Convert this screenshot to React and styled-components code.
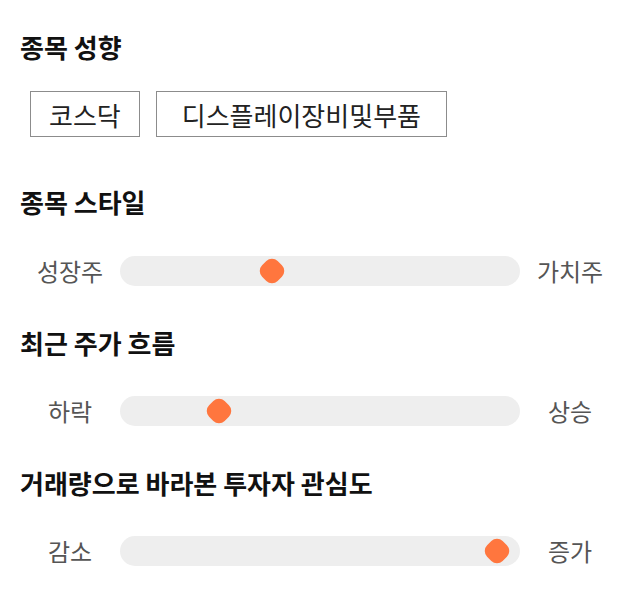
import React from "react";
import styled, { createGlobalStyle } from "styled-components";

const Global = createGlobalStyle`
  html, body { margin: 0; padding: 0; background: #fff; }
  body { font-family: "Noto Sans CJK KR", "Noto Sans", sans-serif; color: #111; }
`;

const Page = styled.div`
  width: 640px;
  padding: 32px 20px 0 20px;
  box-sizing: border-box;
  display: flex;
  flex-direction: column;
`;

const Section = styled.section`
  display: flex;
  flex-direction: column;
  gap: ${(p) => p.$gap}px;
  margin-bottom: ${(p) => p.$mb}px;
`;

const Heading = styled.h2`
  margin: 0;
  font-size: 26px;
  line-height: 30px;
  font-weight: 700;
  color: #111;
`;

const Chips = styled.div`
  display: flex;
  gap: 16px;
  padding-left: 10px;
`;

const Chip = styled.div`
  height: 46px;
  box-sizing: border-box;
  border: 1px solid #8c8c8c;
  padding: 0 ${(p) => p.$pad}px;
  display: flex;
  align-items: center;
  font-size: 26px;
  color: #222;
  background: #fff;
`;

const SliderRow = styled.div`
  display: grid;
  grid-template-columns: 100px 400px 100px;
  align-items: center;
  height: 30px;
`;

const SideLabel = styled.span`
  text-align: center;
  font-size: 24px;
  line-height: 30px;
  color: #555;
`;

const Track = styled.div`
  position: relative;
  height: 30px;
  border-radius: 15px;
  background: #eeeeee;
`;

const Thumb = styled.div`
  position: absolute;
  top: 50%;
  width: 22px;
  height: 22px;
  margin-left: -11px;
  margin-top: -11px;
  border-radius: 8px;
  background: #ff763e;
  transform: rotate(45deg);
`;

function Slider({ left, right, value }) {
  const pos = 14 + value * 372;
  return (
    <SliderRow>
      <SideLabel>{left}</SideLabel>
      <Track>
        <Thumb style={{ left: `${pos}px` }} />
      </Track>
      <SideLabel>{right}</SideLabel>
    </SliderRow>
  );
}

export default function App() {
  return (
    <>
      <Global />
      <Page>
        <Section $gap={29} $mb={50}>
          <Heading>종목 성향</Heading>
          <Chips>
            <Chip $pad={18}>코스닥</Chip>
            <Chip $pad={25}>디스플레이장비및부품</Chip>
          </Chips>
        </Section>
        <Section $gap={39} $mb={42}>
          <Heading>종목 스타일</Heading>
          <Slider left="성장주" right="가치주" value={0.371} />
        </Section>
        <Section $gap={38} $mb={42}>
          <Heading>최근 주가 흐름</Heading>
          <Slider left="하락" right="상승" value={0.228} />
        </Section>
        <Section $gap={38} $mb={0}>
          <Heading>거래량으로 바라본 투자자 관심도</Heading>
          <Slider left="감소" right="증가" value={0.976} />
        </Section>
      </Page>
    </>
  );
}
